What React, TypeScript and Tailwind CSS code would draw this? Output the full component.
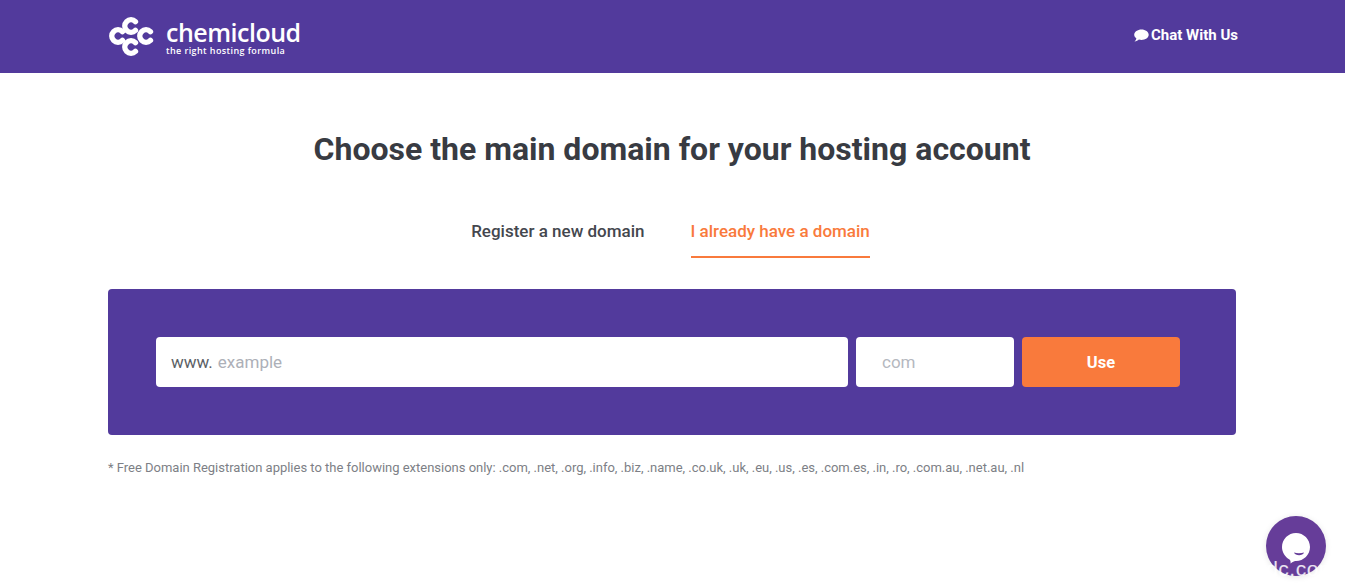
const Logo = () => (
    <div className="flex items-center">
        <svg width="48" height="42" viewBox="0 0 48 42" fill="none" stroke="#fff" strokeWidth="5.5" strokeLinecap="round" className="mr-[10px]">
            <path d="M 14.4 15.6 A 6.2 6.2 0 1 0 14.4 24.4" />
            <path d="M 27.4 5.6 A 6.2 6.2 0 1 0 27.4 14.4" />
            <path d="M 27.4 26.6 A 6.2 6.2 0 1 0 27.4 35.4" />
            <path d="M 42.4 15.6 A 6.2 6.2 0 1 0 42.4 24.4" />
        </svg>
        <div className="flex flex-col mt-[2px] text-white font-['Open_Sans',sans-serif]">
            <span className="text-[25px] leading-[24px] font-semibold tracking-[-0.5px]">chemicloud</span>
            <span className="text-[9px] leading-[11px] mt-px font-semibold tracking-[0.4px]">the right hosting formula</span>
        </div>
    </div>
);

const ChatBubble = () => (
    <svg width="15" height="13" viewBox="0 0 15 13" fill="#fff">
        <path d="M7.5 0.5C11.4 0.5 14.7 2.8 14.7 5.8C14.7 8.8 11.4 11 7.5 11C6.6 11 5.7 10.9 4.9 10.6C3.8 11.6 2.3 12.4 0.5 12.5C1.4 11.6 2.1 10.5 2.4 9.4C1 8.4 0.2 7.2 0.2 5.8C0.2 2.8 3.6 0.5 7.5 0.5Z" />
    </svg>
);

export default function App() {
    return (
        <div className="relative h-[585px] overflow-hidden bg-white font-['Roboto',sans-serif]">

            {/* Header */}
            <header className="h-[73px] bg-[#523a9c]">
                <div className="w-[1128px] h-full ml-[108px] flex items-center justify-between">
                    <Logo />
                    <a className="flex items-center gap-[2px] mr-[-2px] mb-[3px] text-[15px] font-bold text-white">
                        <ChatBubble />
                        Chat With Us
                    </a>
                </div>
            </header>

            <main className="w-[1128px] ml-[108px]">
                <h1 className="mt-[55px] text-center text-[32px] leading-[42px] font-bold text-[#383b42]">
                    Choose the main domain for your hosting account
                </h1>

                {/* Tabs */}
                <div className="mt-[40px] pr-[3px] flex justify-center gap-[46px] text-[17px] font-medium">
                    <button className="h-[48px] pb-[4px] text-[#44474e]">Register a new domain</button>
                    <button className="h-[48px] pb-[2px] text-[#f97a3c] border-b-2 border-[#f97a3c]">
                        I already have a domain
                    </button>
                </div>

                {/* Domain form */}
                <div className="mt-[31px] h-[146px] rounded bg-[#523a9c] pl-12 pr-14 flex items-center gap-2">
                    <div className="flex-1 h-[50px] rounded bg-white pl-[15px] pt-[2px] flex items-center gap-[5px] text-[17px]">
                        <span className="text-[#5c5f66]">www.</span>
                        <span className="text-[#adb0b8]">example</span>
                    </div>
                    <div className="w-[158px] h-[50px] rounded bg-white pl-[26px] pt-[2px] flex items-center text-[17px] text-[#b5b8bf]">
                        com
                    </div>
                    <button className="w-[158px] h-[50px] rounded bg-[#f97a3c] pt-[2px] text-[16.5px] font-bold text-white">Use</button>
                </div>

                <p className="mt-[25px] text-[13px] leading-4 tracking-[-0.012px] text-[#7d7f86]">
                    * Free Domain Registration applies to the following extensions only: .com, .net, .org, .info, .biz, .name, .co.uk, .uk, .eu, .us, .es, .com.es, .in, .ro, .com.au, .net.au, .nl
                </p>
            </main>

            {/* Chat launcher */}
            <div className="absolute left-[1266px] top-[516px] w-[60px] h-[60px] rounded-full bg-[#663d99] shadow-[0_1px_6px_rgba(0,0,0,0.1)] flex items-center justify-center">
                <svg width="30" height="34" viewBox="0 0 30 34" className="mt-[4px]">
                    <path d="M15 2C22.7 2 29 8.3 29 16C29 23.7 22.7 30 15 30C14 30 12 30.5 9.5 32.5C9.8 30.5 9.5 29.3 8.5 28.4C4 26 1 21.3 1 16C1 8.3 7.3 2 15 2Z" fill="#fff" />
                    <path d="M13 21.5C15.8 22.6 20 22.6 23 21.5C22 25.2 14.2 25.2 13 21.5Z" fill="#663d99" />
                </svg>
            </div>

            {/* Watermark */}
            <span className="absolute left-[1261px] top-[555px] text-[21px] leading-7 tracking-[0.5px] text-white/85 font-['Liberation_Sans',sans-serif]">
                idc.com
            </span>
        </div>
    );
}
